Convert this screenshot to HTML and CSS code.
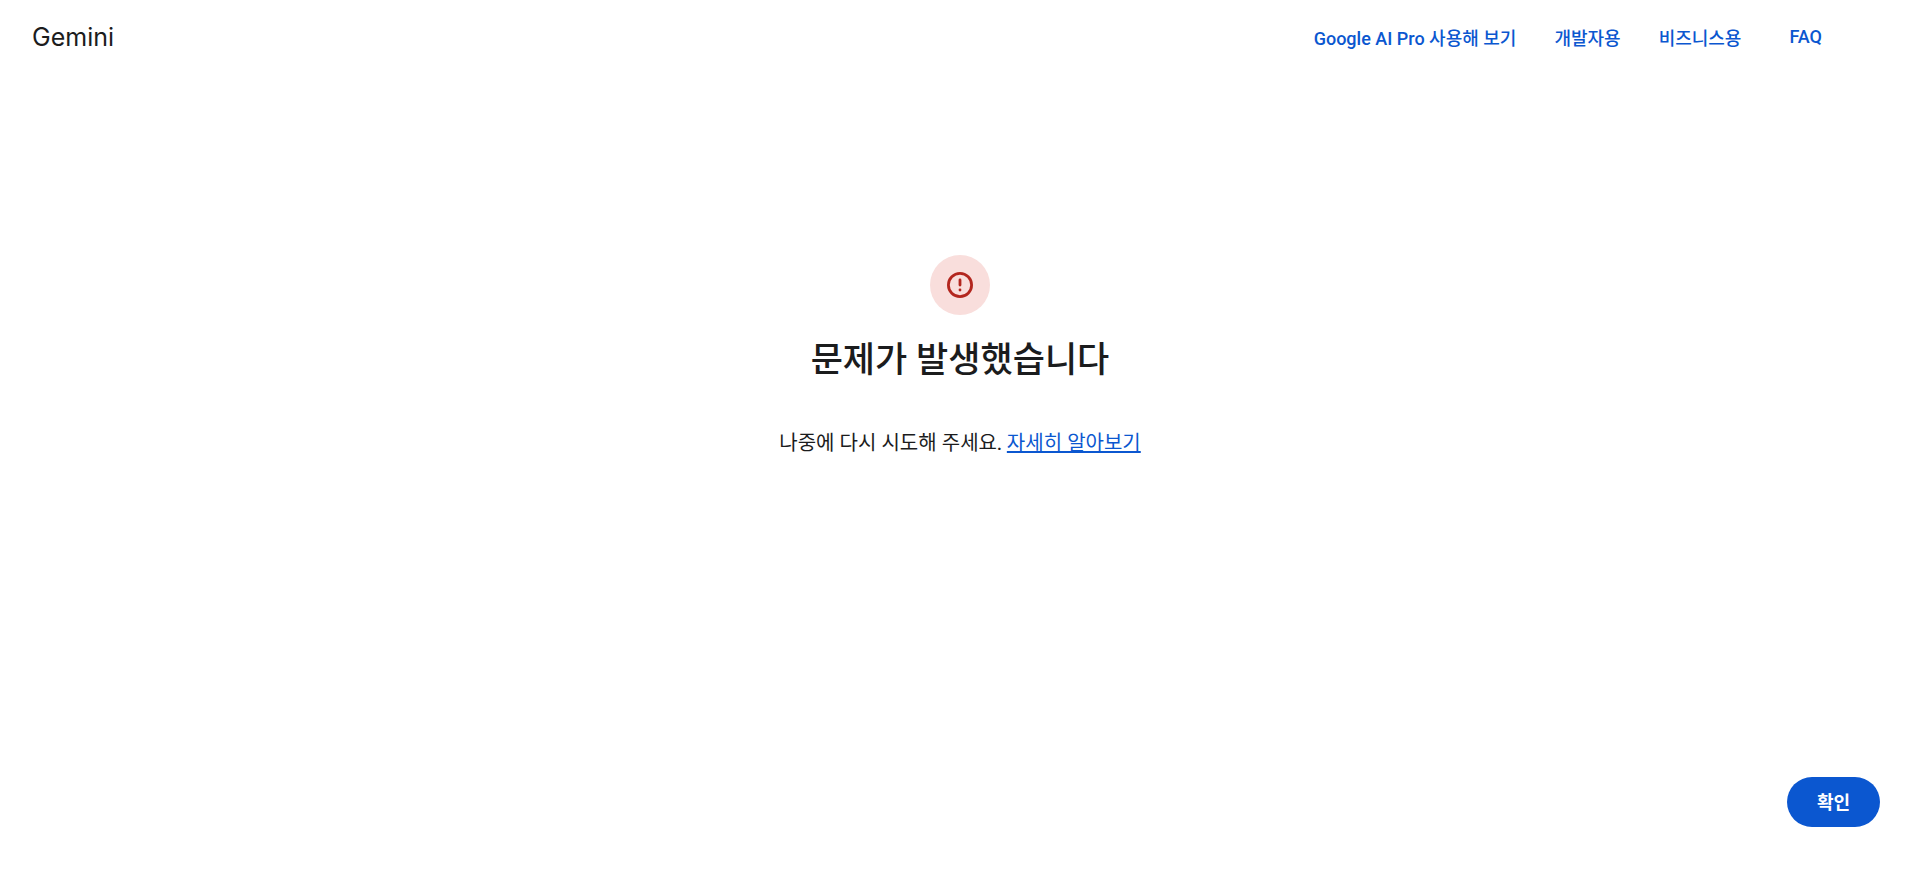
FILE: index.html
```
<!DOCTYPE html>
<html lang="ko">
<head>
<meta charset="utf-8">
<title>Gemini</title>
<link rel="stylesheet" href="styles.css">
</head>
<body>

<header class="header">
  <a class="logo" href="#">Gemini</a>
  <nav class="nav">
    <a href="#">Google AI Pro 사용해 보기</a>
    <a href="#">개발자용</a>
    <a href="#">비즈니스용</a>
    <a class="faq" href="#">FAQ</a>
  </nav>
</header>

<main class="error">
  <div class="error-icon">
    <svg width="26" height="26" viewBox="0 0 26 26" fill="none" stroke="#b3261e">
      <circle cx="13" cy="13" r="11.6" stroke-width="2.8"/>
      <path d="M13 8v5" stroke-width="2.8" stroke-linecap="round"/>
      <circle cx="13" cy="18" r="1.4" fill="#b3261e" stroke="none"/>
    </svg>
  </div>
  <h1>문제가 발생했습니다</h1>
  <p>나중에 다시 시도해 주세요. <a href="#">자세히 알아보기</a></p>
</main>

<footer class="footer">
  <button type="button" class="confirm">확인</button>
</footer>

</body>
</html>
```
FILE: styles.css
```
* {
  box-sizing: border-box;
}

body {
  display: flex;
  flex-direction: column;
  min-height: 100vh;
  margin: 0;
  background: #fff;
  color: #1b1c1d;
  font-family: Lato, "Noto Sans CJK KR", sans-serif;
}

.header {
  display: flex;
  align-items: center;
  justify-content: space-between;
  height: 73px;
  padding: 0 96px 0 32px;
}

.logo {
  color: #1b1c1d;
  font-family: Inter, sans-serif;
  font-size: 25px;
  font-weight: 400;
  text-decoration: none;
}

.nav {
  display: flex;
  align-items: center;
  gap: 38px;
}

.nav a {
  color: #0b57d0;
  font-family: Roboto, "Noto Sans CJK KR", sans-serif;
  font-size: 18px;
  font-weight: 500;
  text-decoration: none;
}

.nav .faq {
  padding-left: 10px;
}

.error {
  flex: 1;
  display: flex;
  flex-direction: column;
  align-items: center;
  padding: 182px 0 0 2px;
  text-align: center;
}

.error-icon {
  display: flex;
  align-items: center;
  justify-content: center;
  width: 60px;
  height: 60px;
  border-radius: 50%;
  background: #f9dedc;
}

.error h1 {
  margin: 21px 0 46px;
  font-size: 35px;
  font-weight: 500;
  line-height: 45px;
}

.error p {
  margin: 0;
  font-size: 20px;
  line-height: 30px;
}

.error p a {
  color: #0b57d0;
  text-decoration-thickness: 2px;
}

.footer {
  display: flex;
  justify-content: flex-end;
  padding: 0 38px 60px;
}

.confirm {
  height: 50px;
  padding: 0 30px 2px;
  border: none;
  border-radius: 25px;
  background: #0b57d0;
  color: #fff;
  font-family: "Noto Sans CJK KR", sans-serif;
  font-size: 18px;
  font-weight: 700;
  cursor: pointer;
}
```
